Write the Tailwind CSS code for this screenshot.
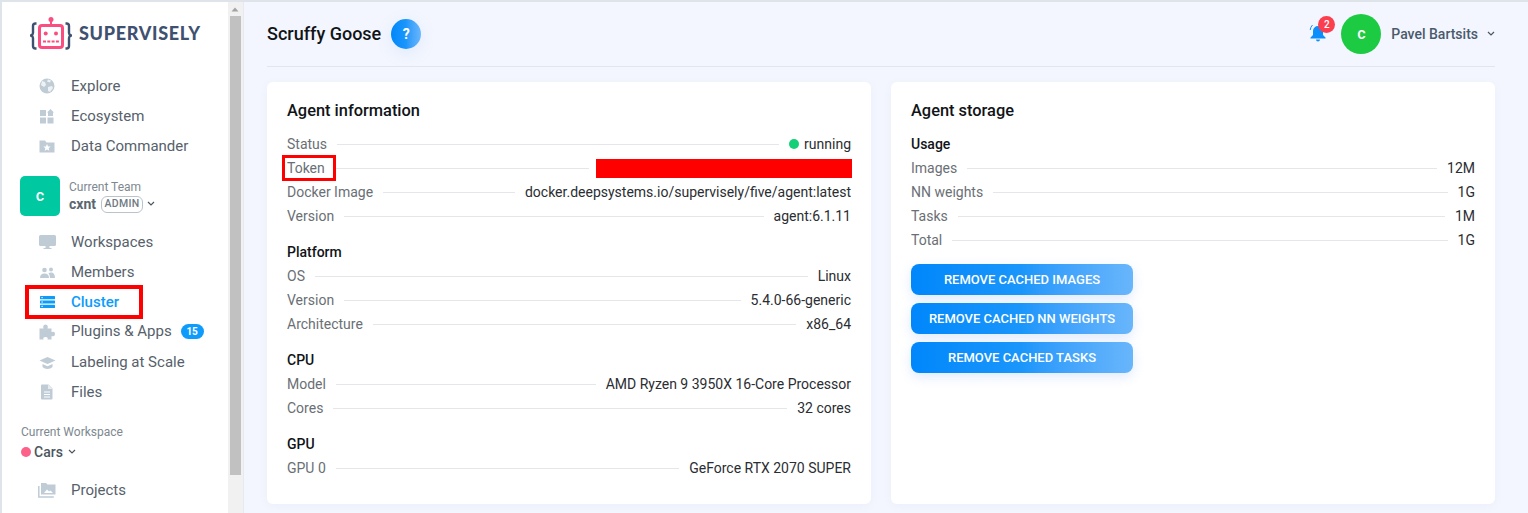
<!DOCTYPE html>
<html>
<head>
<meta charset="utf-8">
<script src="https://cdn.jsdelivr.net/npm/@tailwindcss/browser@4"></script>
</head>
<body class="font-['Roboto',sans-serif] h-[513px] w-[1528px] overflow-hidden bg-[#f3f6fe]">
<div class="flex h-[513px] w-[1528px] overflow-hidden border-t-2 border-[#dfe4ea]">
  <!-- sidebar -->
  <aside class="w-[228px] h-[511px] shrink-0 bg-white border-l-2 border-[#dfe4ea] relative overflow-hidden">
    <div class="flex items-center h-[62px] pl-[28px] gap-[6px] pt-[1px]">
      <svg width="42" height="36" viewBox="0 0 42 36" class="mt-[3px]">
        <path d="M6.500 6.500 h-1 q-2.500 0 -2.500 2.500 v7 q0 1.800 -2 2.500 q2 .7 2 2.500 v8 q0 2.500 2.500 2.500 h1" fill="none" stroke="#3f5170" stroke-width="2.400"/>
        <path d="M35.500 6.500 h1 q2.500 0 2.500 2.500 v7 q0 1.800 2 2.500 q-2 .7 -2 2.500 v8 q0 2.500 -2.500 2.500 h-1" fill="none" stroke="#3f5170" stroke-width="2.400"/>
        <path d="M21 3 v5" stroke="#fb4d7f" stroke-width="2"/>
        <circle cx="21" cy="2.500" r="2.500" fill="#fb4d7f"/>
        <rect x="9.500" y="8.500" width="23" height="22" rx="2.500" fill="#fff" stroke="#fb4d7f" stroke-width="3"/>
        <circle cx="15.700" cy="16.500" r="2" fill="#fb4d7f"/><circle cx="26" cy="16.500" r="2" fill="#fb4d7f"/>
        <path d="M13 24.500 h16" stroke="#fb4d7f" stroke-width="1.800" stroke-dasharray="3 1.300"/>
      </svg>
      <span class="font-['Lato',sans-serif] font-black text-[18px] tracking-[0.7px] text-[#3f5170] ml-[1px]">SUPERVISELY</span>
    </div>
    <nav class="pt-[7px]">
      <a class="flex items-center h-[30px] pl-[37px] text-[15px] text-[#56616b]">
        <svg width="16" height="16" viewBox="0 0 16 16" class="mr-[16px]"><circle cx="8" cy="8" r="7.500" fill="#bfccd6"/><path d="M3 3 l3 1 1 3 -2 2 -3-2z M9 9 l4-1 1 2 -3 4 -2-1z M9 1.500 l3 1 -1 2 -3-1z" fill="#eef2f5"/></svg>
        Explore
      </a>
      <a class="flex items-center h-[30px] pl-[37px] text-[15px] text-[#56616b]">
        <svg width="16" height="16" viewBox="0 0 16 16" class="mr-[16px]"><g fill="#bfccd6"><rect x="1" y="2" width="6" height="6"/><rect x="1" y="9.500" width="6" height="6"/><rect x="8.500" y="9.500" width="6" height="6"/><path d="M11.500 1 l3.500 3.500 -1 0 v3.500 h-5 v-3.500 h-1z"/></g></svg>
        Ecosystem
      </a>
      <a class="flex items-center h-[30px] pl-[37px] text-[15px] text-[#56616b]">
        <svg width="16" height="16" viewBox="0 0 16 16" class="mr-[16px]"><path d="M0.500 2.500 h5.500 l1.500 2 h8 v10 h-15z" fill="#bfccd6"/><path d="M8 6 l1.100 2.400 2.500.2 -1.900 1.600 .6 2.500 -2.300-1.300 -2.300 1.300 .6-2.500 -1.900-1.600 2.500-.2z" fill="#fff"/></svg>
        Data Commander
      </a>
    </nav>
    <div class="flex items-center pl-[18px] mt-[15px] h-[40px]">
      <div class="w-[40px] h-[40px] rounded-[5px] bg-[#00c9a1] text-white font-medium text-[16px] flex items-center justify-center pb-[1px]">c</div>
      <div class="ml-[9px]">
        <div class="text-[12px] leading-[16px] text-[#7d8890]">Current Team</div>
        <div class="flex items-center h-[19px]">
          <span class="text-[14px] font-bold text-[#5b6670]">cxnt</span>
          <span class="ml-[5px] border border-[#b9c3cc] rounded-[6px] h-[17px] w-[42px] flex items-center justify-center text-[10.5px] tracking-[0.3px] font-medium text-[#6f7a84]">ADMIN</span>
          <svg width="8" height="6" viewBox="0 0 8 6" class="ml-[4px]"><path d="M1 1 l3 3 3-3" fill="none" stroke="#4b5660" stroke-width="1.200"/></svg>
        </div>
      </div>
    </div>
    <nav class="pt-[11px]">
      <a class="flex items-center h-[30px] pl-[37px] text-[15px] text-[#56616b]">
        <svg width="17" height="16" viewBox="0 0 17 16" class="mr-[15px]"><path d="M1.500 1 h14 a1.500 1.500 0 0 1 1.500 1.500 v8 a1.500 1.500 0 0 1-1.500 1.500 h-5 v2 h2 v1 h-8 v-1 h2 v-2 h-5 a1.500 1.500 0 0 1-1.500-1.500 v-8 a1.500 1.500 0 0 1 1.500-1.500z" fill="#bfccd6"/></svg>
        Workspaces
      </a>
      <a class="flex items-center h-[30px] pl-[37px] text-[15px] text-[#56616b]">
        <svg width="17" height="16" viewBox="0 0 17 16" class="mr-[15px]"><g fill="#bfccd6"><circle cx="5.500" cy="6" r="2.300"/><circle cx="12" cy="5.500" r="2"/><path d="M1 14 q0-4.500 4.500-4.500 t4.500 4.500z"/><path d="M11 14 q0-3-1.500-5 q1-.5 2.500-.5 c3 0 4 2.500 4 5.500z"/></g></svg>
        Members
      </a>
      <a class="flex items-center h-[30px] pl-[37px] text-[15px] font-medium text-[#0d9cfb]">
        <svg width="16" height="16" viewBox="0 0 16 16" class="mr-[16px]"><g fill="#0d9cfb"><rect x="1" y="2" width="15" height="3.200" rx=".5"/><rect x="1" y="6.400" width="15" height="3.200" rx=".5"/><rect x="1" y="10.800" width="15" height="3.200" rx=".5"/></g><g fill="#fff"><rect x="2.500" y="3" width="1.200" height="1.200"/><rect x="2.500" y="7.400" width="1.200" height="1.200"/><rect x="2.500" y="11.800" width="1.200" height="1.200"/></g></svg>
        Cluster
      </a>
      <a class="flex items-center h-[29px] pl-[37px] text-[15px] text-[#56616b]">
        <svg width="16" height="16" viewBox="0 0 16 16" class="mr-[16px]"><path d="M0.500 4.500 h4 q-1.200-3.500 2-4 q3.200 .5 2 4 h4 v3.500 q3.500-1 3.500 2 t-3.500 2 v3.500 h-4 q1-2.500-2-2.500 t-2 2.500 h-4z" fill="#bfccd6"/></svg>
        Plugins &amp; Apps
        <span class="ml-[9px] w-[23px] h-[15px] rounded-full bg-[#0d9cfb] text-white text-[10px] font-bold flex items-center justify-center">15</span>
      </a>
      <a class="flex items-center h-[31px] pt-[2px] pl-[37px] text-[15px] text-[#56616b]">
        <svg width="17" height="16" viewBox="0 0 17 16" class="mr-[15px]"><g fill="#bfccd6"><path d="M8.500 2 l8 3.500 -8 3.500 -8-3.500z"/><path d="M3.500 9 l5 2.200 5-2.200 v3 q-2 2-5 2 t-5-2z"/></g></svg>
        Labeling at Scale
      </a>
      <a class="flex items-center h-[30px] pl-[37px] text-[15px] text-[#56616b]">
        <svg width="16" height="16" viewBox="0 0 16 16" class="mr-[16px]"><path d="M3 0.500 h6.500 l4 4 v10 a1 1 0 0 1-1 1 h-9.500 a1 1 0 0 1-1-1 v-13 a1 1 0 0 1 1-1z" fill="#bfccd6"/><path d="M5 8 h6 M5 10.500 h6 M5 13 h6" stroke="#fff" stroke-width="1"/><path d="M9 .5 v4.500 h4.500" fill="#e8edf1"/></svg>
        Files
      </a>
    </nav>
    <div class="pl-[19px] pt-[17px]">
      <div class="text-[12px] leading-[16px] text-[#7d8890]">Current Workspace</div>
      <div class="flex items-center h-[24px]">
        <span class="w-[10px] h-[10px] rounded-full bg-[#fb6189] mr-[3px]"></span>
        <span class="text-[14px] font-medium text-[#4b5660]">Cars</span>
        <svg width="8" height="6" viewBox="0 0 8 6" class="ml-[5px]"><path d="M1 1 l3 3 3-3" fill="none" stroke="#4b5660" stroke-width="1.200"/></svg>
      </div>
    </div>
    <a class="flex items-center h-[30px] pl-[36px] mt-[11px] text-[15px] text-[#56616b]">
      <svg width="18" height="16" viewBox="0 0 18 16" class="mr-[15px]"><path d="M.8 4 v11 h15" fill="none" stroke="#bfccd6" stroke-width="1.500"/><path d="M3 1 h5 l1.500 1.500 h8 v10 h-14.500z" fill="#bfccd6"/><path d="M6 11 l3-3.500 2 2 1.500-1 2.500 2.500z" fill="#fff"/></svg>
      Projects
    </a>
    <!-- red highlight -->
    <div class="absolute left-[23px] top-[283px] w-[118px] h-[34px] border-[4px] border-[#ff0000]"></div>
  </aside>
  <!-- scrollbar -->
  <div class="w-[15px] h-[511px] shrink-0 bg-[#f1f1f1] flex flex-col items-center">
    <svg width="15" height="14" viewBox="0 0 15 14"><path d="M3.500 9.500 l3.500-4 3.500 4z" fill="#a3a3a3"/></svg>
    <div class="w-[11px] h-[459px] bg-[#c1c1c1] mr-[1px]"></div>
  </div>
  <!-- main -->
  <main class="flex-1 pl-[23px] pr-[33px] border-l border-[#e6e9ee]">
    <header class="flex items-center h-[65px] border-b border-[#e0e5ee]">
      <h1 class="text-[18px] font-medium text-[#111417] mb-[2px]">Scruffy Goose</h1>
      <span class="ml-[10px] w-[30px] h-[30px] rounded-full bg-gradient-to-r from-[#0087fb] via-[#1a96fb] to-[#68b6fb] text-white text-[14px] font-bold flex items-center justify-center shadow-[0_4px_16px_rgba(120,160,240,0.15)]">?</span>
      <div class="ml-auto flex items-center">
        <div class="relative w-[18px] h-[18px] mr-[14px] mt-[-2px]">
          <svg width="18" height="18" viewBox="0 0 18 18"><path d="M9 2 a5 5 0 0 1 5 5 v4 l2.500 2.500 v1 h-15 v-1 l2.500-2.500 v-4 a5 5 0 0 1 5-5z" fill="#0d8ffb"/><path d="M7 15.500 h4 a2 2 0 0 1-4 0z" fill="#0d8ffb"/><path d="M3.500 1 q-2 2-2.300 5" fill="none" stroke="#0d8ffb" stroke-width="1"/></svg>
          <span class="absolute left-[9px] top-[-8px] w-[17px] h-[17px] rounded-full bg-[#fb3f4f] text-white text-[10px] font-medium flex items-center justify-center">2</span>
        </div>
        <div class="w-[40px] h-[40px] rounded-full bg-[#1dcb43] text-white font-medium text-[16px] flex items-center justify-center pb-[1px]">c</div>
        <span class="ml-[10px] text-[14px] font-medium text-[#4a5a6c]">Pavel Bartsits</span>
        <svg width="8" height="6" viewBox="0 0 8 6" class="ml-[9px]"><path d="M1 1 l3 3 3-3" fill="none" stroke="#4b5660" stroke-width="1.200"/></svg>
      </div>
    </header>
    <div class="flex gap-[20px] mt-[15px]">
      <!-- agent info -->
      <section class="relative w-[604px] h-[422px] bg-white rounded-[6px] px-[20px] pt-[17px] shadow-[0_2px_8px_rgba(120,140,200,0.06)]">
        <h2 class="text-[16.4px] leading-[24px] font-medium text-[#111417] mb-[9px]">Agent information</h2>
        <div class="flex items-center h-[24px] text-[14px]"><span class="text-[#6a6f75]">Status</span><span class="flex-1 mx-[10px] h-px bg-[#e4e6e9]"></span><span class="w-[10px] h-[10px] rounded-full bg-[#13cf78] mr-[5px]"></span><span class="text-[#2a2d31]">running</span></div>
        <div class="flex items-center h-[24px] text-[14px]"><span class="text-[#6a6f75]">Token</span><span class="flex-1 mx-[10px] h-px bg-[#e4e6e9]"></span><span class="w-[256px] h-[19px] bg-[#ff0000] mr-[-1px] ml-[-3px]"></span></div>
        <div class="flex items-center h-[24px] text-[14px]"><span class="text-[#6a6f75]">Docker Image</span><span class="flex-1 mx-[10px] h-px bg-[#e4e6e9]"></span><span class="text-[#2a2d31]">docker.deepsystems.io/supervisely/five/agent:latest</span></div>
        <div class="flex items-center h-[24px] text-[14px]"><span class="text-[#6a6f75]">Version</span><span class="flex-1 mx-[10px] h-px bg-[#e4e6e9]"></span><span class="text-[#2a2d31]">agent:6.1.11</span></div>
        <h3 class="text-[14px] leading-[24px] font-medium text-[#111417] mt-[12px]">Platform</h3>
        <div class="flex items-center h-[24px] text-[14px]"><span class="text-[#6a6f75]">OS</span><span class="flex-1 mx-[10px] h-px bg-[#e4e6e9]"></span><span class="text-[#2a2d31]">Linux</span></div>
        <div class="flex items-center h-[24px] text-[14px]"><span class="text-[#6a6f75]">Version</span><span class="flex-1 mx-[10px] h-px bg-[#e4e6e9]"></span><span class="text-[#2a2d31]">5.4.0-66-generic</span></div>
        <div class="flex items-center h-[24px] text-[14px]"><span class="text-[#6a6f75]">Architecture</span><span class="flex-1 mx-[10px] h-px bg-[#e4e6e9]"></span><span class="text-[#2a2d31]">x86_64</span></div>
        <h3 class="text-[14px] leading-[24px] font-medium text-[#111417] mt-[12px]">CPU</h3>
        <div class="flex items-center h-[24px] text-[14px]"><span class="text-[#6a6f75]">Model</span><span class="flex-1 mx-[10px] h-px bg-[#e4e6e9]"></span><span class="text-[#2a2d31]">AMD Ryzen 9 3950X 16-Core Processor</span></div>
        <div class="flex items-center h-[24px] text-[14px]"><span class="text-[#6a6f75]">Cores</span><span class="flex-1 mx-[10px] h-px bg-[#e4e6e9]"></span><span class="text-[#2a2d31]">32 cores</span></div>
        <h3 class="text-[14px] leading-[24px] font-medium text-[#111417] mt-[12px]">GPU</h3>
        <div class="flex items-center h-[24px] text-[14px]"><span class="text-[#6a6f75]">GPU 0</span><span class="flex-1 mx-[10px] h-px bg-[#e4e6e9]"></span><span class="text-[#2a2d31]">GeForce RTX 2070 SUPER</span></div>
        <div class="absolute left-[15px] top-[73px] w-[54px] h-[26px] border-[3px] border-[#ff0000]"></div>
      </section>
      <!-- storage -->
      <section class="w-[604px] h-[422px] bg-white rounded-[6px] px-[20px] pt-[17px] shadow-[0_2px_8px_rgba(120,140,200,0.06)]">
        <h2 class="text-[16.4px] leading-[24px] font-medium text-[#111417] mb-[9px]">Agent storage</h2>
        <h3 class="text-[14px] leading-[24px] font-medium text-[#111417]">Usage</h3>
        <div class="flex items-center h-[24px] text-[14px]"><span class="text-[#6a6f75]">Images</span><span class="flex-1 mx-[10px] h-px bg-[#e4e6e9]"></span><span class="text-[#2a2d31]">12M</span></div>
        <div class="flex items-center h-[24px] text-[14px]"><span class="text-[#6a6f75]">NN weights</span><span class="flex-1 mx-[10px] h-px bg-[#e4e6e9]"></span><span class="text-[#2a2d31]">1G</span></div>
        <div class="flex items-center h-[24px] text-[14px]"><span class="text-[#6a6f75]">Tasks</span><span class="flex-1 mx-[10px] h-px bg-[#e4e6e9]"></span><span class="text-[#2a2d31]">1M</span></div>
        <div class="flex items-center h-[24px] text-[14px]"><span class="text-[#6a6f75]">Total</span><span class="flex-1 mx-[10px] h-px bg-[#e4e6e9]"></span><span class="text-[#2a2d31]">1G</span></div>
        <div class="flex flex-col gap-[8px] mt-[12px] w-[222px]">
          <button class="h-[31px] rounded-[8px] bg-gradient-to-r from-[#0087fb] via-[#1a96fb] to-[#68b6fb] text-white text-[13px] font-medium shadow-[0_4px_12px_rgba(100,150,240,0.2)]">REMOVE CACHED IMAGES</button>
          <button class="h-[31px] rounded-[8px] bg-gradient-to-r from-[#0087fb] via-[#1a96fb] to-[#68b6fb] text-white text-[13px] font-medium shadow-[0_4px_12px_rgba(100,150,240,0.2)]">REMOVE CACHED NN WEIGHTS</button>
          <button class="h-[31px] rounded-[8px] bg-gradient-to-r from-[#0087fb] via-[#1a96fb] to-[#68b6fb] text-white text-[13px] font-medium shadow-[0_4px_12px_rgba(100,150,240,0.2)]">REMOVE CACHED TASKS</button>
        </div>
      </section>
    </div>
  </main>
</div>
</body>
</html>
